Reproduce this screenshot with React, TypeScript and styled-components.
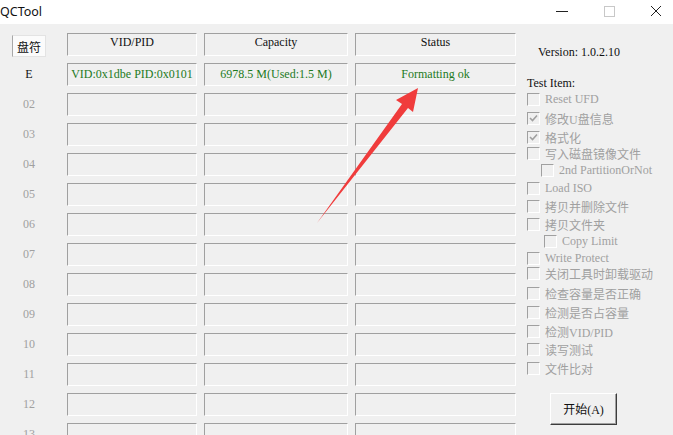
import styled, {createGlobalStyle} from "styled-components"

const GlobalStyle = createGlobalStyle`
    html, body {
        margin: 0;
        padding: 0;
        background: #f0f0f0;
    }
`

const SERIF = `"Liberation Serif", "Noto Sans CJK SC", serif`

const columns = [
    {title: "VID/PID", width: 130, value: "VID:0x1dbe PID:0x0101"},
    {title: "Capacity", width: 144, value: "6978.5 M(Used:1.5 M)"},
    {title: "Status", width: 161, value: "Formatting ok"},
]

const rowLabels = ["02", "03", "04", "05", "06", "07", "08", "09", "10", "11", "12", "13"]

type TestItem = { label: string, checked?: boolean, indent?: number, mt: number }

const testItems: TestItem[] = [
    {label: "Reset UFD", mt: 1},
    {label: "修改U盘信息", checked: true, mt: 4},
    {label: "格式化", checked: true, mt: 4},
    {label: "写入磁盘镜像文件", mt: 1},
    {label: "2nd PartitionOrNot", indent: 14, mt: 2},
    {label: "Load ISO", mt: 3},
    {label: "拷贝并删除文件", mt: 3},
    {label: "拷贝文件夹", mt: 3},
    {label: "Copy Limit", indent: 17, mt: 2},
    {label: "Write Protect", mt: 2},
    {label: "关闭工具时卸载驱动", mt: 0},
    {label: "检查容量是否正确", mt: 5},
    {label: "检测是否占容量", mt: 4},
    {label: "检测VID/PID", mt: 4},
    {label: "读写测试", mt: 3},
    {label: "文件比对", mt: 4},
]

export default function App() {
    return (
        <Window>
            <GlobalStyle/>
            <TitleBar>
                <Title>QCTool</Title>
                <Controls>
                    <ControlButton>
                        <svg width="12" height="12" viewBox="0 0 12 12">
                            <line x1="0" y1="6.5" x2="12" y2="6.5" stroke="#222" strokeWidth="1"/>
                        </svg>
                    </ControlButton>
                    <ControlButton>
                        <svg width="12" height="12" viewBox="0 0 12 12">
                            <rect x="1.5" y="1.5" width="10" height="10" fill="none" stroke="#c8c8c8" strokeWidth="1"/>
                        </svg>
                    </ControlButton>
                    <ControlButton>
                        <svg width="12" height="12" viewBox="0 0 12 12">
                            <path d="M1 1 L11 11 M11 1 L1 11" stroke="#222" strokeWidth="1"/>
                        </svg>
                    </ControlButton>
                </Controls>
            </TitleBar>

            <Body>
                <Table>
                    <Row>
                        <DriveHeader>盘符</DriveHeader>
                        {columns.map((c) => (
                            <HeaderCell key={c.title} $w={c.width}>{c.title}</HeaderCell>
                        ))}
                    </Row>
                    <Row>
                        <RowLabel $active>E</RowLabel>
                        {columns.map((c) => (
                            <Cell key={c.title} $w={c.width}><CellValue>{c.value}</CellValue></Cell>
                        ))}
                    </Row>
                    {rowLabels.map((label) => (
                        <Row key={label}>
                            <RowLabel>{label}</RowLabel>
                            {columns.map((c) => (
                                <Cell key={c.title} $w={c.width}/>
                            ))}
                        </Row>
                    ))}
                </Table>

                <Panel>
                    <Version>Version: 1.0.2.10</Version>
                    <SectionLabel>Test Item:</SectionLabel>
                    {testItems.map((item) => (
                        <CheckRow key={item.label} $mt={item.mt} $indent={item.indent || 0}>
                            <CheckBox>
                                {item.checked && (
                                    <svg width="9" height="9" viewBox="0 0 9 9">
                                        <path d="M1 4 L3.5 6.5 L8 1.5" fill="none" stroke="#a0a0a0" strokeWidth="1.6"/>
                                    </svg>
                                )}
                            </CheckBox>
                            <CheckLabel>{item.label}</CheckLabel>
                        </CheckRow>
                    ))}
                    <StartButton>开始(A)</StartButton>
                </Panel>
            </Body>

            <Arrow width="673" height="435" viewBox="0 0 673 435">
                <polygon
                    points="317,223 402,104 396,100 418,88 413,112 408,108"
                    fill="#f03c3c"
                />
            </Arrow>
        </Window>
    )
}

const Window = styled.div`
    position: relative;
    width: 673px;
    height: 435px;
    overflow: hidden;
    background: #f0f0f0;
    font-family: ${SERIF};
    font-size: 12px;
`

const TitleBar = styled.div`
    height: 24px;
    display: flex;
    align-items: center;
    justify-content: space-between;
    background: #fff;
`

const Title = styled.div`
    margin-top: -2px;
    font-family: "Noto Sans", "Open Sans", sans-serif;
    font-size: 12.5px;
    color: #111;
`

const Controls = styled.div`
    display: flex;
    align-items: center;
    padding-right: 11px;
    gap: 35px;
    margin-top: -2px;
`

const ControlButton = styled.div`
    width: 12px;
    height: 12px;
    display: flex;
`

const Body = styled.div`
    display: flex;
`

const Table = styled.div`
    flex-shrink: 0;
    width: 504px;
    padding: 9px 0 0 12px;
    display: flex;
    flex-direction: column;
    gap: 7px;
`

const Row = styled.div`
    display: flex;
    align-items: flex-start;
    height: 23px;
`

const DriveHeader = styled.div`
    box-sizing: border-box;
    flex-shrink: 0;
    width: 34px;
    height: 22px;
    margin: 2px 21px 0 0;
    display: flex;
    align-items: center;
    justify-content: center;
    background: #fbfbfb;
    border: 1px solid #e3e3e3;
    border-left-color: #a8a8a8;
    color: #111;
    font-family: "Noto Sans CJK SC", sans-serif;
    font-size: 12px;
`

const RowLabel = styled.div<{ $active?: boolean }>`
    flex-shrink: 0;
    width: 34px;
    margin-right: 21px;
    height: 23px;
    line-height: 23px;
    text-align: center;
    color: ${(p) => (p.$active ? "#111" : "#a0a0a0")};
`

const Cell = styled.div<{ $w: number }>`
    box-sizing: border-box;
    flex-shrink: 0;
    width: ${(p) => p.$w}px;
    height: 23px;
    margin-right: 7px;
    border-top: 1px solid #a0a0a0;
    border-left: 1px solid #a0a0a0;
    border-bottom: 1px solid #fff;
    border-right: 1px solid #fff;
    display: flex;
    align-items: center;
    justify-content: center;

    &:last-child {
        margin-right: 0;
    }
`

const HeaderCell = styled(Cell)`
    align-items: flex-start;
    padding-top: 1px;
    color: #111;
`

const CellValue = styled.span`
    color: #1c7a1c;
    white-space: nowrap;
`

const Panel = styled.div`
    padding: 20px 0 0 11px;
    display: flex;
    flex-direction: column;
    align-items: flex-start;
`

const Version = styled.div`
    margin-left: 11px;
    height: 16px;
    line-height: 16px;
    color: #111;
`

const SectionLabel = styled.div`
    margin-top: 15px;
    height: 16px;
    line-height: 16px;
    color: #111;
`

const CheckRow = styled.div<{ $mt: number, $indent: number }>`
    margin-top: ${(p) => p.$mt}px;
    padding-left: ${(p) => p.$indent}px;
    height: 15px;
    display: flex;
    align-items: center;
    gap: 5px;
    white-space: nowrap;
`

const CheckBox = styled.div`
    box-sizing: border-box;
    width: 13px;
    height: 13px;
    border-top: 1px solid #a0a0a0;
    border-left: 1px solid #a0a0a0;
    border-bottom: 1px solid #fff;
    border-right: 1px solid #fff;
    background: #f0f0f0;
    display: flex;
    align-items: center;
    justify-content: center;
`

const CheckLabel = styled.span`
    color: #a0a0a0;
    font-size: 12px;
`

const StartButton = styled.button`
    margin: 17px 0 0 23px;
    width: 67px;
    height: 32px;
    padding: 0;
    background: #f0f0f0;
    border: 1px solid #fff;
    border-right-color: #3c3c3c;
    border-bottom-color: #3c3c3c;
    box-shadow: inset -1px -1px 0 #a0a0a0;
    font-family: ${SERIF};
    font-size: 12px;
    color: #111;
`

const Arrow = styled.svg`
    position: absolute;
    left: 0;
    top: 0;
    pointer-events: none;
`
